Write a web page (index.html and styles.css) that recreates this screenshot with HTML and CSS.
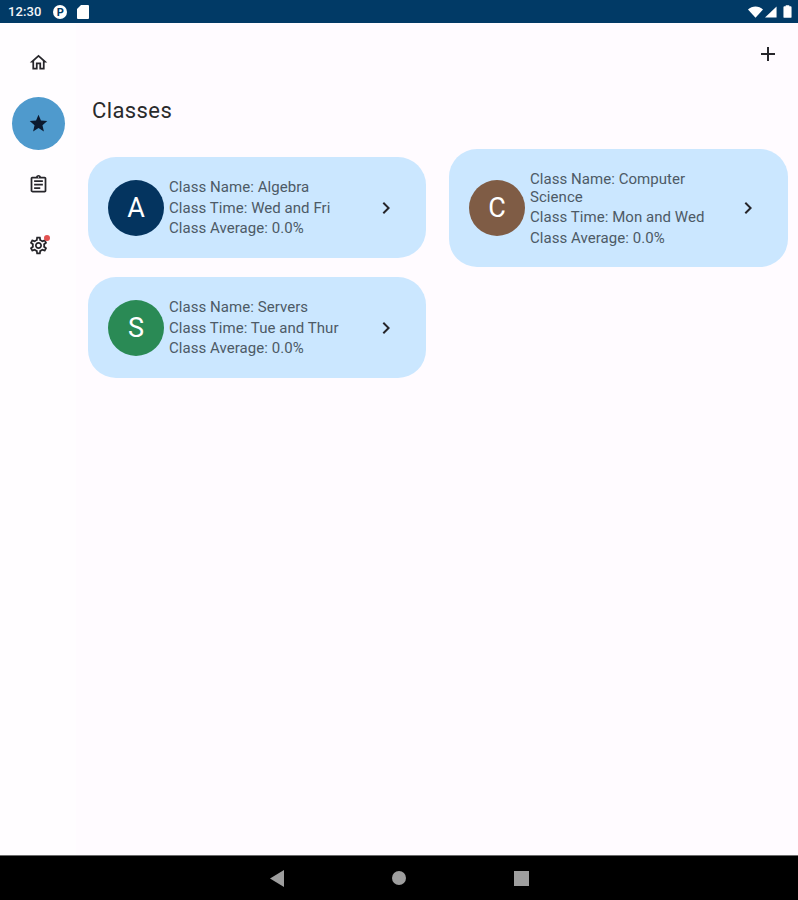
FILE: index.html
```html
<!DOCTYPE html>
<html lang="en">
<head>
  <meta charset="UTF-8" />
  <meta name="viewport" content="width=device-width, initial-scale=1.0" />
  <title>Classes</title>
  <link rel="stylesheet" href="styles.css">
</head>
<body>
  <!-- status bar -->
  <header class="status-bar">
    <div class="status-left">
      <span class="status-time">12:30</span>
      <svg class="status-icon" viewBox="0 0 16 16"><circle cx="8" cy="8" r="7" fill="#fff"/><text x="8.3" y="12" text-anchor="middle" class="status-glyph">P</text></svg>
      <svg class="status-icon sd-icon" viewBox="0 0 12 14"><path fill="#fff" d="M4 0h7a1 1 0 0 1 1 1v12a1 1 0 0 1-1 1H1a1 1 0 0 1-1-1V4z"/></svg>
    </div>
    <div class="status-right">
      <svg class="wifi" viewBox="0 0 16 12"><path fill="#fff" d="M0 3.200C2.200 1.200 5 0 8 0s5.800 1.200 8 3.200L8 12z"/></svg>
      <svg class="signal" viewBox="0 0 14 13"><path fill="#fff" d="M13.500 0v13H0z"/></svg>
      <svg class="battery" viewBox="0 0 10 14"><path fill="#fff" d="M3 0h4v1.200h1.500c.6 0 1 .4 1 1V13c0 .6-.4 1-1 1h-7c-.6 0-1-.4-1-1V2.200c0-.6.4-1 1-1H3z"/></svg>
    </div>
  </header>

  <div class="app">
    <!-- nav rail -->
    <nav class="rail">
      <div class="rail-item">
        <svg class="icon" viewBox="0 0 24 24"><path d="M12 5.690l5 4.500V18h-2v-6H9v6H7v-7.810l5-4.500M12 3L2 12h3v8h6v-6h2v6h6v-8h3L12 3z"/></svg>
      </div>
      <div class="rail-item">
        <div class="rail-active">
          <svg class="icon star" viewBox="0 0 24 24"><path d="M12 17.270L18.180 21l-1.640-7.030L22 9.240l-7.190-.610L12 2 9.190 8.630 2 9.240l5.460 4.730L5.820 21z"/></svg>
        </div>
      </div>
      <div class="rail-item">
        <svg class="icon" viewBox="0 0 24 24"><path d="M7 15h7v2H7zm0-4h10v2H7zm0-4h10v2H7zm12-4h-4.180C14.400 1.840 13.300 1 12 1c-1.300 0-2.400.840-2.820 2H5c-.140 0-.270.010-.400.040-.390.080-.740.280-1.010.550-.180.180-.330.400-.430.640-.100.230-.160.490-.160.770v14c0 .270.060.540.160.780s.250.450.430.640c.270.270.620.470 1.010.550.130.020.260.030.400.030h14c1.100 0 2-.900 2-2V5c0-1.100-.900-2-2-2zm-7-.250c.410 0 .750.340.750.750s-.340.750-.750.750-.750-.340-.750-.750.340-.750.750-.750zM19 19H5V5h14v14z"/></svg>
      </div>
      <div class="rail-item">
        <div class="icon-wrap">
          <svg class="icon" viewBox="0 0 24 24"><path d="M19.430 12.980c.040-.320.070-.640.070-.980 0-.340-.030-.660-.070-.980l2.110-1.650c.190-.150.240-.420.120-.640l-2-3.460c-.090-.160-.260-.250-.440-.250-.060 0-.120.010-.170.030l-2.490 1c-.520-.400-1.080-.730-1.690-.980l-.380-2.650C14.460 2.180 14.250 2 14 2h-4c-.250 0-.460.180-.490.420l-.380 2.650c-.610.250-1.170.590-1.690.980l-2.490-1c-.060-.020-.120-.030-.180-.030-.170 0-.340.090-.430.250l-2 3.460c-.130.220-.070.490.12.640l2.110 1.650c-.040.320-.070.650-.070.980 0 .330.030.660.070.980l-2.110 1.650c-.190.150-.240.420-.12.640l2 3.460c.090.160.260.250.440.250.060 0 .120-.010.170-.030l2.490-1c.520.400 1.080.730 1.690.980l.380 2.650c.030.240.240.420.490.420h4c.250 0 .460-.180.490-.420l.380-2.650c.610-.250 1.170-.590 1.690-.980l2.490 1c.060.020.120.030.180.030.170 0 .340-.090.430-.250l2-3.460c.120-.220.070-.490-.120-.640l-2.110-1.650zm-1.980-1.710c.040.310.050.520.050.730 0 .210-.020.430-.05.730l-.140 1.130.890.700 1.080.84-.700 1.210-1.270-.510-1.040-.420-.900.680c-.430.320-.840.560-1.250.730l-1.060.43-.160 1.130-.200 1.350h-1.400l-.190-1.350-.160-1.130-1.060-.43c-.430-.180-.830-.410-1.230-.710l-.910-.700-1.060.43-1.270.510-.700-1.210 1.080-.84.890-.700-.140-1.130c-.030-.310-.050-.540-.050-.740s.020-.430.050-.730l.140-1.130-.89-.700-1.080-.84.700-1.210 1.270.510 1.040.42.900-.68c.43-.32.84-.56 1.25-.73l1.06-.43.16-1.13.200-1.350h1.390l.19 1.350.16 1.130 1.060.43c.43.18.83.41 1.23.71l.91.700 1.06-.43 1.27-.51.7 1.21-1.07.85-.89.700.14 1.130zM12 8c-2.210 0-4 1.790-4 4s1.790 4 4 4 4-1.790 4-4-1.790-4-4-4zm0 6c-1.100 0-2-.900-2-2s.900-2 2-2 2 .900 2 2-.900 2-2 2z"/></svg>
          <span class="badge"></span>
        </div>
      </div>
    </nav>

    <main class="content">
      <div class="toolbar">
        <svg class="icon plus" viewBox="0 0 24 24"><path d="M19 13h-6v6h-2v-6H5v-2h6V5h2v6h6z"/></svg>
      </div>
      <h1 class="title">Classes</h1>

      <section class="class-grid">
        <article class="class-card">
          <div class="avatar avatar-navy">A</div>
          <div class="class-info">
            <p>Class Name: Algebra</p>
            <p>Class Time: Wed and Fri</p>
            <p>Class Average: 0.0%</p>
          </div>
          <svg class="icon chevron" viewBox="0 0 24 24"><path d="M10 6L8.590 7.410 13.170 12l-4.580 4.590L10 18l6-6z"/></svg>
        </article>

        <article class="class-card">
          <div class="avatar avatar-brown">C</div>
          <div class="class-info">
            <p>Class Name: Computer Science</p>
            <p>Class Time: Mon and Wed</p>
            <p>Class Average: 0.0%</p>
          </div>
          <svg class="icon chevron" viewBox="0 0 24 24"><path d="M10 6L8.590 7.410 13.170 12l-4.580 4.590L10 18l6-6z"/></svg>
        </article>

        <article class="class-card">
          <div class="avatar avatar-green">S</div>
          <div class="class-info">
            <p>Class Name: Servers</p>
            <p>Class Time: Tue and Thur</p>
            <p>Class Average: 0.0%</p>
          </div>
          <svg class="icon chevron" viewBox="0 0 24 24"><path d="M10 6L8.590 7.410 13.170 12l-4.580 4.590L10 18l6-6z"/></svg>
        </article>
      </section>
    </main>
  </div>

  <!-- android nav -->
  <footer class="nav-bar">
    <svg class="nav-back" viewBox="0 0 14 17"><path fill="#9e9e9e" d="M14 0v17L0 8.500z"/></svg>
    <span class="nav-home"></span>
    <span class="nav-recent"></span>
  </footer>
</body>
</html>
```

FILE: styles.css
```css
* {
  box-sizing: border-box;
}

body {
  margin: 0;
  width: 798px;
  height: 900px;
  display: flex;
  flex-direction: column;
  overflow: hidden;
  font-family: Roboto, "Liberation Sans", sans-serif;
  background-color: #fffbff;
  color: #1c1b1f;
}

.status-bar {
  height: 23px;
  flex-shrink: 0;
  display: flex;
  justify-content: space-between;
  align-items: center;
  padding: 0 6px 0 8px;
  background-color: #013a66;
}

.status-left {
  display: flex;
  align-items: center;
}

.status-time {
  width: 44px;
  font-size: 13px;
  font-weight: 500;
  letter-spacing: 0.1px;
  color: #f4f6f8;
}

.status-icon {
  width: 16px;
  height: 16px;
  margin-right: 9px;
}

.sd-icon {
  width: 12px;
  height: 14px;
}

.status-glyph {
  font-size: 11px;
  font-weight: 700;
  fill: #013a66;
}

.status-right {
  display: flex;
  align-items: center;
  gap: 2px;
}

.wifi {
  width: 15px;
  height: 12px;
}

.signal {
  width: 12px;
  height: 12px;
}

.battery {
  width: 9px;
  height: 13px;
  margin-left: 4px;
}

.app {
  flex: 1;
  display: flex;
  min-height: 0;
}

.rail {
  width: 76px;
  flex-shrink: 0;
  padding-top: 8.500px;
  background-color: #fffdff;
}

.rail-item {
  height: 61px;
  display: flex;
  justify-content: center;
  align-items: center;
}

.rail-active {
  width: 53px;
  height: 53px;
  border-radius: 50%;
  display: flex;
  justify-content: center;
  align-items: center;
  background-color: #4f9acd;
}

.icon {
  width: 21px;
  height: 21px;
  display: block;
  fill: #26252a;
}

.star {
  fill: #0c1a30;
}

.icon-wrap {
  position: relative;
}

.badge {
  position: absolute;
  top: 0;
  right: -1px;
  width: 6px;
  height: 6px;
  border-radius: 50%;
  background-color: #e25050;
}

.content {
  flex: 1;
  min-width: 0;
}

.toolbar {
  display: flex;
  justify-content: flex-end;
  padding: 19px 18px 0 0;
}

.plus {
  width: 24px;
  height: 24px;
}

.title {
  margin: 32px 0 0 16px;
  font-size: 22px;
  font-weight: 400;
  line-height: 26px;
  letter-spacing: 0.4px;
  color: #2a2a2c;
}

.class-grid {
  display: grid;
  grid-template-columns: 338px 339px;
  column-gap: 23px;
  row-gap: 10px;
  align-items: center;
  margin: 25px 0 0 12px;
}

.class-card {
  display: flex;
  align-items: center;
  min-height: 101px;
  padding: 0 28px 0 20px;
  border-radius: 28px;
  background-color: #cbe7ff;
}

.class-card:first-child {
  margin-bottom: 1px;
}

.avatar {
  width: 56px;
  height: 56px;
  flex-shrink: 0;
  margin-right: 5px;
  border-radius: 50%;
  display: flex;
  justify-content: center;
  align-items: center;
  font-size: 27px;
  color: #fff;
}

.avatar-navy {
  background-color: #04345f;
}

.avatar-brown {
  background-color: #7f5c45;
}

.avatar-green {
  background-color: #2a8a55;
}

.class-info {
  flex: 1;
  min-width: 0;
  padding: 20.500px 0;
  font-size: 15px;
  line-height: 18px;
  letter-spacing: 0.05px;
  color: #4d5a66;
}

.class-info p {
  margin: 0;
}

.class-info p + p {
  margin-top: 2.500px;
}

.chevron {
  width: 24px;
  height: 24px;
  flex-shrink: 0;
}

.nav-bar {
  height: 45px;
  flex-shrink: 0;
  display: flex;
  justify-content: center;
  align-items: center;
  gap: 108px;
  background-color: #000;
  border-top: 1px solid #6a6a6a;
}

.nav-back {
  width: 14px;
  height: 17px;
}

.nav-home {
  width: 14px;
  height: 14px;
  border-radius: 50%;
  background-color: #9e9e9e;
}

.nav-recent {
  width: 15px;
  height: 15px;
  background-color: #9e9e9e;
}
```
